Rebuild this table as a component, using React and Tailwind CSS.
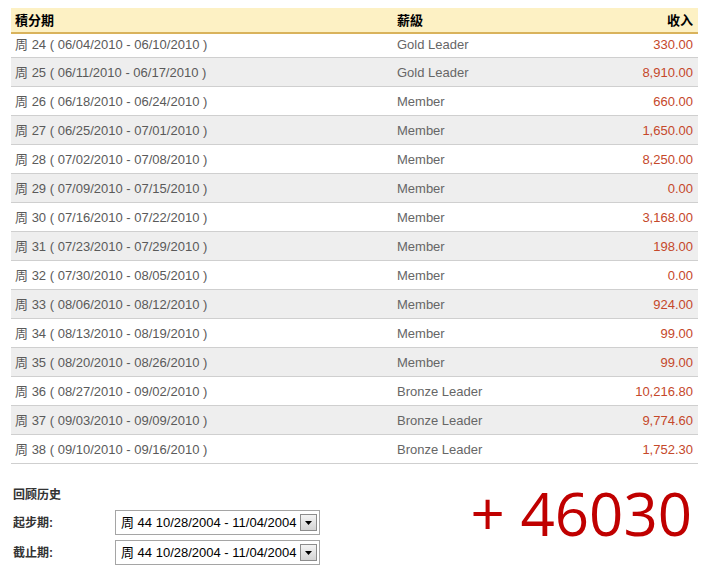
import React from 'react';

const rows = [
  [24, '06/04/2010', '06/10/2010', 'Gold Leader', '330.00'],
  [25, '06/11/2010', '06/17/2010', 'Gold Leader', '8,910.00'],
  [26, '06/18/2010', '06/24/2010', 'Member', '660.00'],
  [27, '06/25/2010', '07/01/2010', 'Member', '1,650.00'],
  [28, '07/02/2010', '07/08/2010', 'Member', '8,250.00'],
  [29, '07/09/2010', '07/15/2010', 'Member', '0.00'],
  [30, '07/16/2010', '07/22/2010', 'Member', '3,168.00'],
  [31, '07/23/2010', '07/29/2010', 'Member', '198.00'],
  [32, '07/30/2010', '08/05/2010', 'Member', '0.00'],
  [33, '08/06/2010', '08/12/2010', 'Member', '924.00'],
  [34, '08/13/2010', '08/19/2010', 'Member', '99.00'],
  [35, '08/20/2010', '08/26/2010', 'Member', '99.00'],
  [36, '08/27/2010', '09/02/2010', 'Bronze Leader', '10,216.80'],
  [37, '09/03/2010', '09/09/2010', 'Bronze Leader', '9,774.60'],
  [38, '09/10/2010', '09/16/2010', 'Bronze Leader', '1,752.30'],
];

const font = { fontFamily: '"Liberation Sans", Arial, "Noto Sans CJK SC", sans-serif' };

const WeekSelect = () => (
  <div className="w-[205px] h-[25px] border border-[#a5a5a5] bg-white flex items-center pl-[5px] pr-[2px] text-[13px] font-normal text-black">
    <span className="flex-1 whitespace-nowrap">周 44 10/28/2004 - 11/04/2004</span>
    <span className="w-[17px] h-[17px] border border-[#8c8c8c] bg-gradient-to-b from-[#f4f4f4] to-[#d4d4d4] flex items-center justify-center">
      <svg width="7" height="4" viewBox="0 0 7 4"><path d="M0 0h7L3.5 4z" fill="#000" /></svg>
    </span>
  </div>
);

export default function App() {
  return (
    <div className="w-[703px] h-[566px] bg-white pt-[8px] pl-[11px] pr-[5px] overflow-hidden" style={font}>
      {/* table */}
      <div className="w-[687px]">
        <div className="h-[26px] pt-[2px] bg-[#fdf1c4] border-b-2 border-[#d9b35c] flex items-center text-[13px] font-bold text-black">
          <div className="w-[386px] pl-[4px]">積分期</div>
          <div className="flex-1">薪級</div>
          <div className="pr-[5px]">收入</div>
        </div>
        {rows.map(([wk, a, b, lvl, amt], i) => (
          <div
            key={wk}
            className={`flex border-b border-[#cfcfcf] text-[13px] ${i === 0 ? 'h-[24px] items-start pt-[2px]' : 'h-[29px] items-center pt-[1px]'} ${i % 2 === 1 ? 'bg-[#eeeeee]' : 'bg-white'}`}
          >
            <div className="w-[386px] pl-[4px] text-[#5a5a5a] leading-[18px]">周 {wk} ( {a} - {b} )</div>
            <div className="flex-1 text-[#666] leading-[18px]">{lvl}</div>
            <div className="pr-[5px] text-[#c5482a] leading-[18px]">{amt}</div>
          </div>
        ))}
      </div>

      {/* bottom */}
      <div className="flex justify-between w-[687px] mt-[22px]">
        <div className="pl-[2px] text-[12px] font-bold text-[#333]">
          <div className="leading-[18px]">回顾历史</div>
          <div className="flex flex-col gap-[5px] mt-[6px]">
            <div className="flex items-center">
              <span className="w-[102px]">起步期:</span>
              <WeekSelect />
            </div>
            <div className="flex items-center">
              <span className="w-[102px]">截止期:</span>
              <WeekSelect />
            </div>
          </div>
        </div>
        <div
          className="text-[60px] leading-none text-[#c00000] pr-[6px] mt-[-3px]"
          style={{ fontFamily: '"Open Sans", sans-serif' }}
        >
          + 46030
        </div>
      </div>
    </div>
  );
}
